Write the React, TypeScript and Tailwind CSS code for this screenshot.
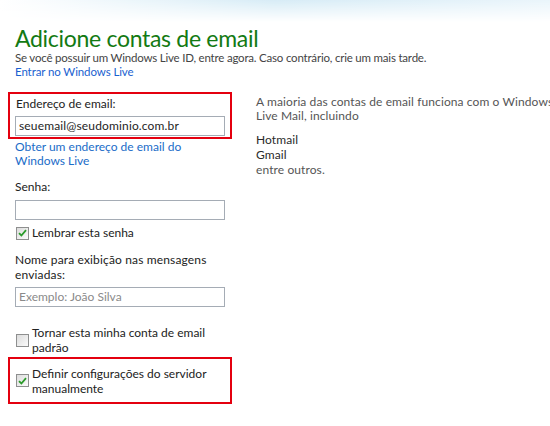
import React from "react";

const font = { fontFamily: 'Lato, "Noto Sans", sans-serif' };

function Check({ checked }: { checked: boolean }) {
  return (
    <span className="relative inline-flex h-[13px] w-[13px] shrink-0 items-center justify-center border border-[#8e8f8f] bg-gradient-to-br from-[#dcdcdc] to-[#fbfbfb]">
      {checked && (
        <svg width="9" height="8" viewBox="0 0 9 8">
          <path d="M1 4.2 L3.4 6.5 L8 1.2" fill="none" stroke="#2a9b2a" strokeWidth="1.8" />
        </svg>
      )}
    </span>
  );
}

function Input({ value, placeholder }: { value?: string; placeholder?: string }) {
  return (
    <div className="flex h-[20px] w-[210px] items-center border border-[#a5acb5] bg-white px-[3px] text-[12px] leading-none">
      {value ? (
        <span className="tracking-[0.15px] text-[#1e1e1e]">{value}</span>
      ) : (
        <span className="text-[#8a8a8a]">{placeholder}</span>
      )}
    </div>
  );
}

export default function App() {
  return (
    <div className="relative h-[426px] w-[550px] overflow-hidden bg-white text-[12px] tracking-[0px] text-[#333]" style={font}>
      <div className="pointer-events-none absolute left-0 top-0 h-[22px] w-[550px] bg-gradient-to-r from-white via-[#d7ecf6] to-[#eaf5fb] [mask-image:linear-gradient(to_bottom,black,transparent)]" />
      <div className="relative px-[15px] pt-[24px]">
        <h1 className="text-[23px] font-normal leading-[28px] tracking-[-0.3px] text-[#137a13]">Adicione contas de email</h1>
        <p className="mt-[-1px] text-[11.5px] leading-[14px] tracking-[-0.2px] text-[#444]">Se você possuir um Windows Live ID, entre agora. Caso contrário, crie um mais tarde.</p>
        <p className="text-[11.5px] leading-[14px] tracking-[-0.1px] text-[#1a5fd0]">Entrar no Windows Live</p>
      </div>
      <div className="relative mt-[13px] flex">
        <div className="w-[232px] shrink-0">
          <div className="ml-[8px] w-[224px] border-2 border-[#e4000f] pb-[1px] pl-[5px] pt-[2px]">
            <div className="pl-[1px] leading-[15px] text-[#222]">Endereço de email:</div>
            <div className="mt-[5px]">
              <Input value="seuemail@seudominio.com.br" />
            </div>
          </div>
          <div className="ml-[15px] mt-[1px] leading-[14px] text-[#1a6cc8]">
            Obter um endereço de email do
            <br />
            Windows Live
          </div>
          <div className="ml-[15px] mt-[12px] leading-[14px] text-[#222]">Senha:</div>
          <div className="ml-[15px] mt-[6px]">
            <Input />
          </div>
          <div className="ml-[16px] mt-[6px] flex h-[14px] items-center gap-[3px] leading-[14px] text-[#222]">
            <Check checked />
            <span>Lembrar esta senha</span>
          </div>
          <div className="ml-[15px] mt-[12px] leading-[15px] tracking-[0.15px] text-[#222]">
            Nome para exibição nas mensagens
            <br />
            enviadas:
          </div>
          <div className="ml-[15px] mt-[5px]">
            <Input placeholder="Exemplo: João Silva" />
          </div>
          <div className="ml-[16px] mt-[18px] flex items-center gap-[3px] leading-[15px] text-[#222]">
            <Check checked={false} />
            <span>
              Tornar esta minha conta de email
              <br />
              padrão
            </span>
          </div>
          <div className="ml-[8px] mt-[2px] flex h-[47px] w-[224px] items-center gap-[3px] border-2 border-[#e4000f] pl-[6px] leading-[15px] text-[#222]">
            <Check checked />
            <span>
              Definir configurações do servidor
              <br />
              manualmente
            </span>
          </div>
        </div>
        <div className="ml-[24px] whitespace-nowrap pt-[3px] leading-[14px] tracking-[0.1px] text-[#555]">
          <div>A maioria das contas de email funciona com o Windows</div>
          <div>Live Mail, incluindo</div>
          <div className="mt-[9px] leading-[15px] text-[#2a2a2a]">Hotmail</div>
          <div className="leading-[15px] text-[#2a2a2a]">Gmail</div>
          <div className="leading-[15px]">entre outros.</div>
        </div>
      </div>
    </div>
  );
}
